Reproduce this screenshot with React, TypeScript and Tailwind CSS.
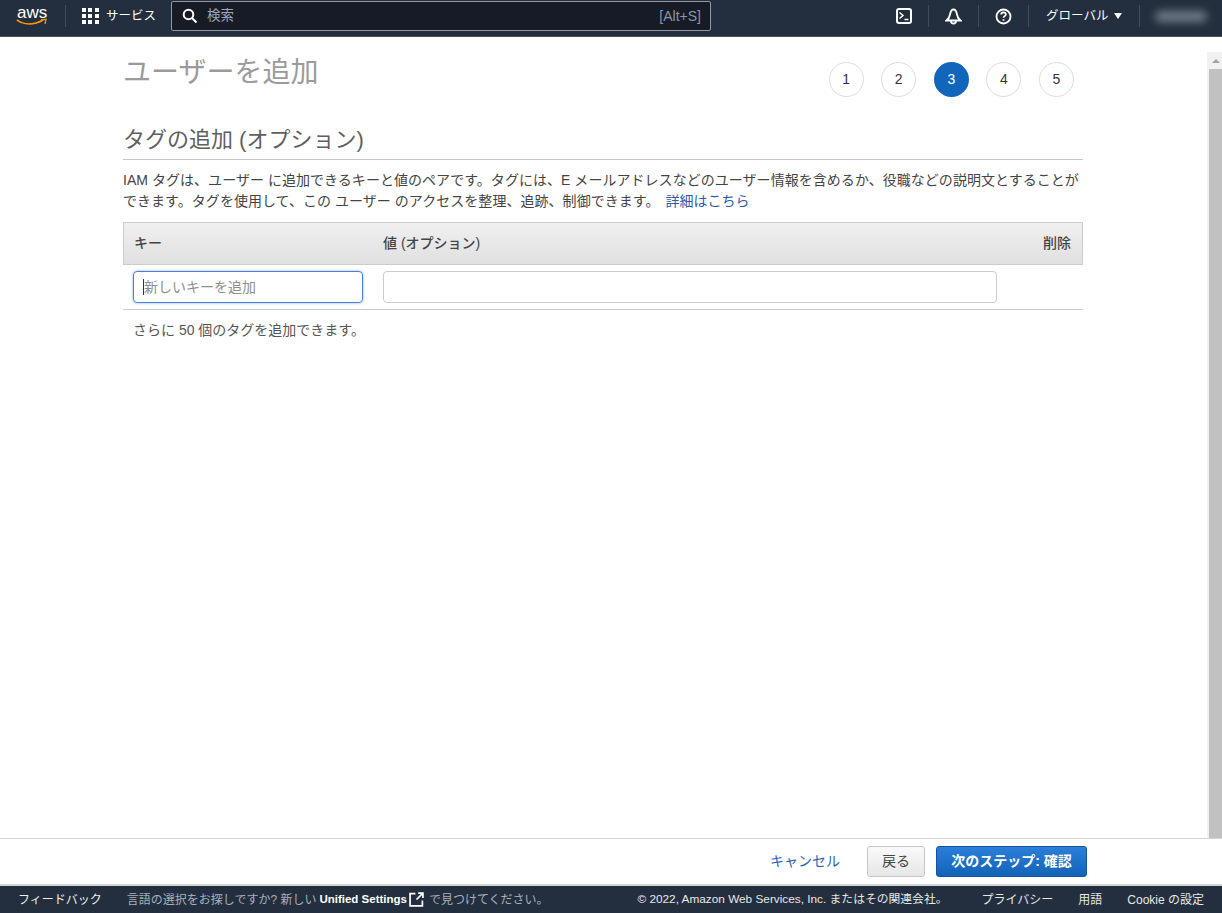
import React from 'react';

const jp = "font-['Liberation_Sans','Noto_Sans_CJK_JP',sans-serif]";

// Wizard step bubble
const Step = ({ n, active }: { n: number; active?: boolean }) => (
  <div
    className={
      active
        ? 'flex h-[35px] w-[35px] items-center justify-center rounded-full bg-[#1166bb] text-[14px] text-white'
        : 'flex h-[35px] w-[35px] items-center justify-center rounded-full border border-[#dddddd] bg-white text-[14px] text-[#333333]'
    }
  >
    {n}
  </div>
);

const Divider = () => <div className="h-[22px] w-px bg-[#414d5c]" />;

const TopBar = () => (
  <header className="flex h-[37px] shrink-0 items-center border-b border-[#4a5563] bg-[#232f3e] pb-[4px] text-white">
    <div className="flex w-[65px] shrink-0 justify-center">
      <svg width="34" height="22" viewBox="0 0 34 22">
        <text x="1" y="13" fontSize="17" fill="#ffffff" fontFamily="Liberation Sans">aws</text>
        <path d="M1 15c4.500 3.500 12 5 19 3 2.500-.7 5-1.600 7-3" fill="none" stroke="#ff9900" strokeWidth="1.600" />
        <path d="M25 15l5-.8-1 4.800" fill="none" stroke="#ff9900" strokeWidth="1.300" />
      </svg>
    </div>
    <Divider />
    <div className="ml-[16px] grid w-[17px] shrink-0 grid-cols-3 gap-[2px]">
      {Array.from({ length: 9 }).map((_, i) => (
        <span key={i} className="h-[4px] w-[4px] bg-white" />
      ))}
    </div>
    <span className="ml-[7px] w-[50px] shrink-0 whitespace-nowrap text-[12.500px]">サービス</span>
    <div className="ml-[15px] flex h-[30px] w-[540px] shrink-0 items-center rounded-[2px] border border-[#8d99a8] bg-[#161b25] pl-[10px] pr-[9px]">
      <svg width="16" height="16" viewBox="0 0 16 16" fill="none" stroke="#ffffff" strokeWidth="2">
        <circle cx="6.500" cy="6.500" r="4.800" />
        <path d="M10 10l4.500 4.500" />
      </svg>
      <span className="ml-[9px] text-[13.500px] text-[#9ba7b6]">検索</span>
      <span className="ml-auto text-[14px] text-[#8b97a6]">[Alt+S]</span>
    </div>
    <div className="ml-[185px] flex h-[16px] w-[16px] shrink-0 items-center justify-center rounded-[3px] border-2 border-white">
      <svg width="12" height="12" viewBox="0 0 12 12" fill="none" stroke="#ffffff" strokeWidth="1.500">
        <path d="M1.500 2.500l3.500 3-3.500 3M6.500 9.500h4" />
      </svg>
    </div>
    <div className="ml-[16px]"><Divider /></div>
    <svg className="ml-[16px] shrink-0" width="17" height="17" viewBox="0 0 17 17" fill="none" stroke="#ffffff" strokeWidth="1.800">
      <path d="M1.500 12.500h14c-2-1.500-3-3-3.500-6C11.500 3.500 10.500 1.500 8.500 1.500S5.500 3.500 5 6.500c-.5 3-1.500 4.500-3.500 6z" />
      <path d="M6 13a2.500 2.500 0 0 0 5 0" />
    </svg>
    <div className="ml-[16px]"><Divider /></div>
    <svg className="ml-[16px] shrink-0" width="17" height="17" viewBox="0 0 17 17" fill="none" stroke="#ffffff" strokeWidth="1.800">
      <circle cx="8.500" cy="8.500" r="7" />
      <path d="M6.200 6.600c0-1.400 1-2.200 2.300-2.200s2.300.8 2.300 2c0 1.700-2.300 1.700-2.300 3.400" />
      <path d="M8.500 11.300v1.500" />
    </svg>
    <div className="ml-[16px]"><Divider /></div>
    <span className="ml-[17px] shrink-0 whitespace-nowrap text-[12.500px]">グローバル</span>
    <span className="ml-[6px] h-0 w-0 border-x-[4px] border-t-[6px] border-x-transparent border-t-white" />
    <div className="ml-[17px]"><Divider /></div>
    <div className="ml-[15px] h-[11px] w-[52px] rounded-full bg-[#6f7a87] blur-[4px]" />
  </header>
);

const Footer = () => (
  <footer className="flex h-[27px] shrink-0 items-center justify-between bg-[#232f3e] pl-[18px] pr-[18px] text-[12px]">
    <div className="flex items-center">
      <span className="text-[#f0f0f0]">フィードバック</span>
      <span className="ml-[25px] text-[#a8b1bb]">言語の選択をお探しですか? 新しい</span>
      <span className="ml-[3px] text-[11.500px] font-bold text-white">Unified Settings</span>
      <svg className="ml-[2px]" width="15" height="15" viewBox="0 0 14 14" fill="none" stroke="#ffffff" strokeWidth="1.600">
        <path d="M6 1.500H1v11.500h11.500V8" />
        <path d="M7 7l6-6M8.500 1H13v4.500" />
      </svg>
      <span className="ml-[5px] text-[#a8b1bb]">で見つけてください。</span>
    </div>
    <div className="flex items-center text-[#e8e8e8]">
      <span className="text-[11.800px]">© 2022, Amazon Web Services, Inc. またはその関連会社。</span>
      <span className="ml-[34px]">プライバシー</span>
      <span className="ml-[25px]">用語</span>
      <span className="ml-[25px]">Cookie の設定</span>
    </div>
  </footer>
);

export default function App() {
  return (
    <div className={`${jp} flex h-[913px] w-[1222px] flex-col overflow-hidden bg-white text-[#444444]`}>
      <TopBar />
      <div className="flex min-h-0 flex-1">
        <main className="min-w-0 flex-1 pl-[123px]">
          <div className="w-[960px]">
            <div className="flex h-[84px] justify-between">
              <h1 className="pt-[16px] text-[28px] leading-[40px] text-[#9b9b9b]">ユーザーを追加</h1>
              <div className="flex gap-[17.600px] pr-[9px] pt-[25px]">
                <Step n={1} />
                <Step n={2} />
                <Step n={3} active />
                <Step n={4} />
                <Step n={5} />
              </div>
            </div>
            <h2 className="mt-[1px] h-[38px] border-b border-[#c8c8c8] text-[22px] leading-[35px] text-[#5f5f5f]">
              タグの追加 (オプション)
            </h2>
            <p className="mt-[10px] text-[14px] leading-[21px] tracking-[0.040px] text-[#444444]">
              IAM タグは、ユーザー に追加できるキーと値のペアです。タグには、E メールアドレスなどのユーザー情報を含めるか、役職などの説明文とすることができます。タグを使用して、この ユーザー のアクセスを整理、追跡、制御できます。{' '}
              <a className="ml-[2px] text-[#2a5ca8]">詳細はこちら</a>
            </p>
            <div className="mt-[10px] flex h-[43px] items-center border border-[#cccccc] bg-gradient-to-b from-[#f0f0f0] to-[#e0e0e0] text-[14px] font-medium text-[#444444]">
              <span className="ml-[10px] w-[249px]">キー</span>
              <span>値 (オプション)</span>
              <span className="ml-auto mr-[11px]">削除</span>
            </div>
            <div className="flex h-[45px] items-center gap-[20px] border-b border-[#cccccc] pl-[10px]">
              <div className="flex h-[32px] w-[230px] items-center rounded-[4px] border border-[#4a80d4] pl-[9px] text-[14px] text-[#8e8e8e] shadow-[0_0_3px_rgba(74,128,212,0.6)]">
                <span className="h-[16px] w-px bg-[#333333]" />
                新しいキーを追加
              </div>
              <div className="h-[32px] w-[614px] rounded-[4px] border border-[#cccccc]" />
            </div>
            <p className="ml-[10px] mt-[10px] text-[14px] leading-[20px] text-[#555555]">さらに 50 個のタグを追加できます。</p>
          </div>
        </main>
        <div className="mt-[15px] flex w-[15px] shrink-0 flex-col bg-[#f1f1f1]">
          <div className="flex h-[17px] items-center justify-center pl-[2px]">
            <span className="h-0 w-0 border-x-[4px] border-b-[4px] border-x-transparent border-b-[#a3a3a3]" />
          </div>
          <div className="ml-[2px] flex-1 bg-[#c1c1c1]" />
        </div>
      </div>
      <div className="flex h-[46px] shrink-0 items-center justify-end border-t border-[#d5d5d5] pr-[135px]">
        <span className="text-[14px] text-[#2a64b8]">キャンセル</span>
        <button className="ml-[27px] h-[31px] w-[58px] rounded-[3px] border border-[#c6c6c6] bg-gradient-to-b from-[#fafafa] to-[#e6e6e6] text-[14px] text-[#444444]">戻る</button>
        <button className="ml-[11px] h-[31px] w-[151px] rounded-[3px] border border-[#15549c] bg-gradient-to-b from-[#2b7fd8] to-[#1262b8] text-[14px] font-bold text-white">次のステップ: 確認</button>
      </div>
      <div className="h-[2px] shrink-0 bg-[#d5d5d5]" />
      <Footer />
    </div>
  );
}
